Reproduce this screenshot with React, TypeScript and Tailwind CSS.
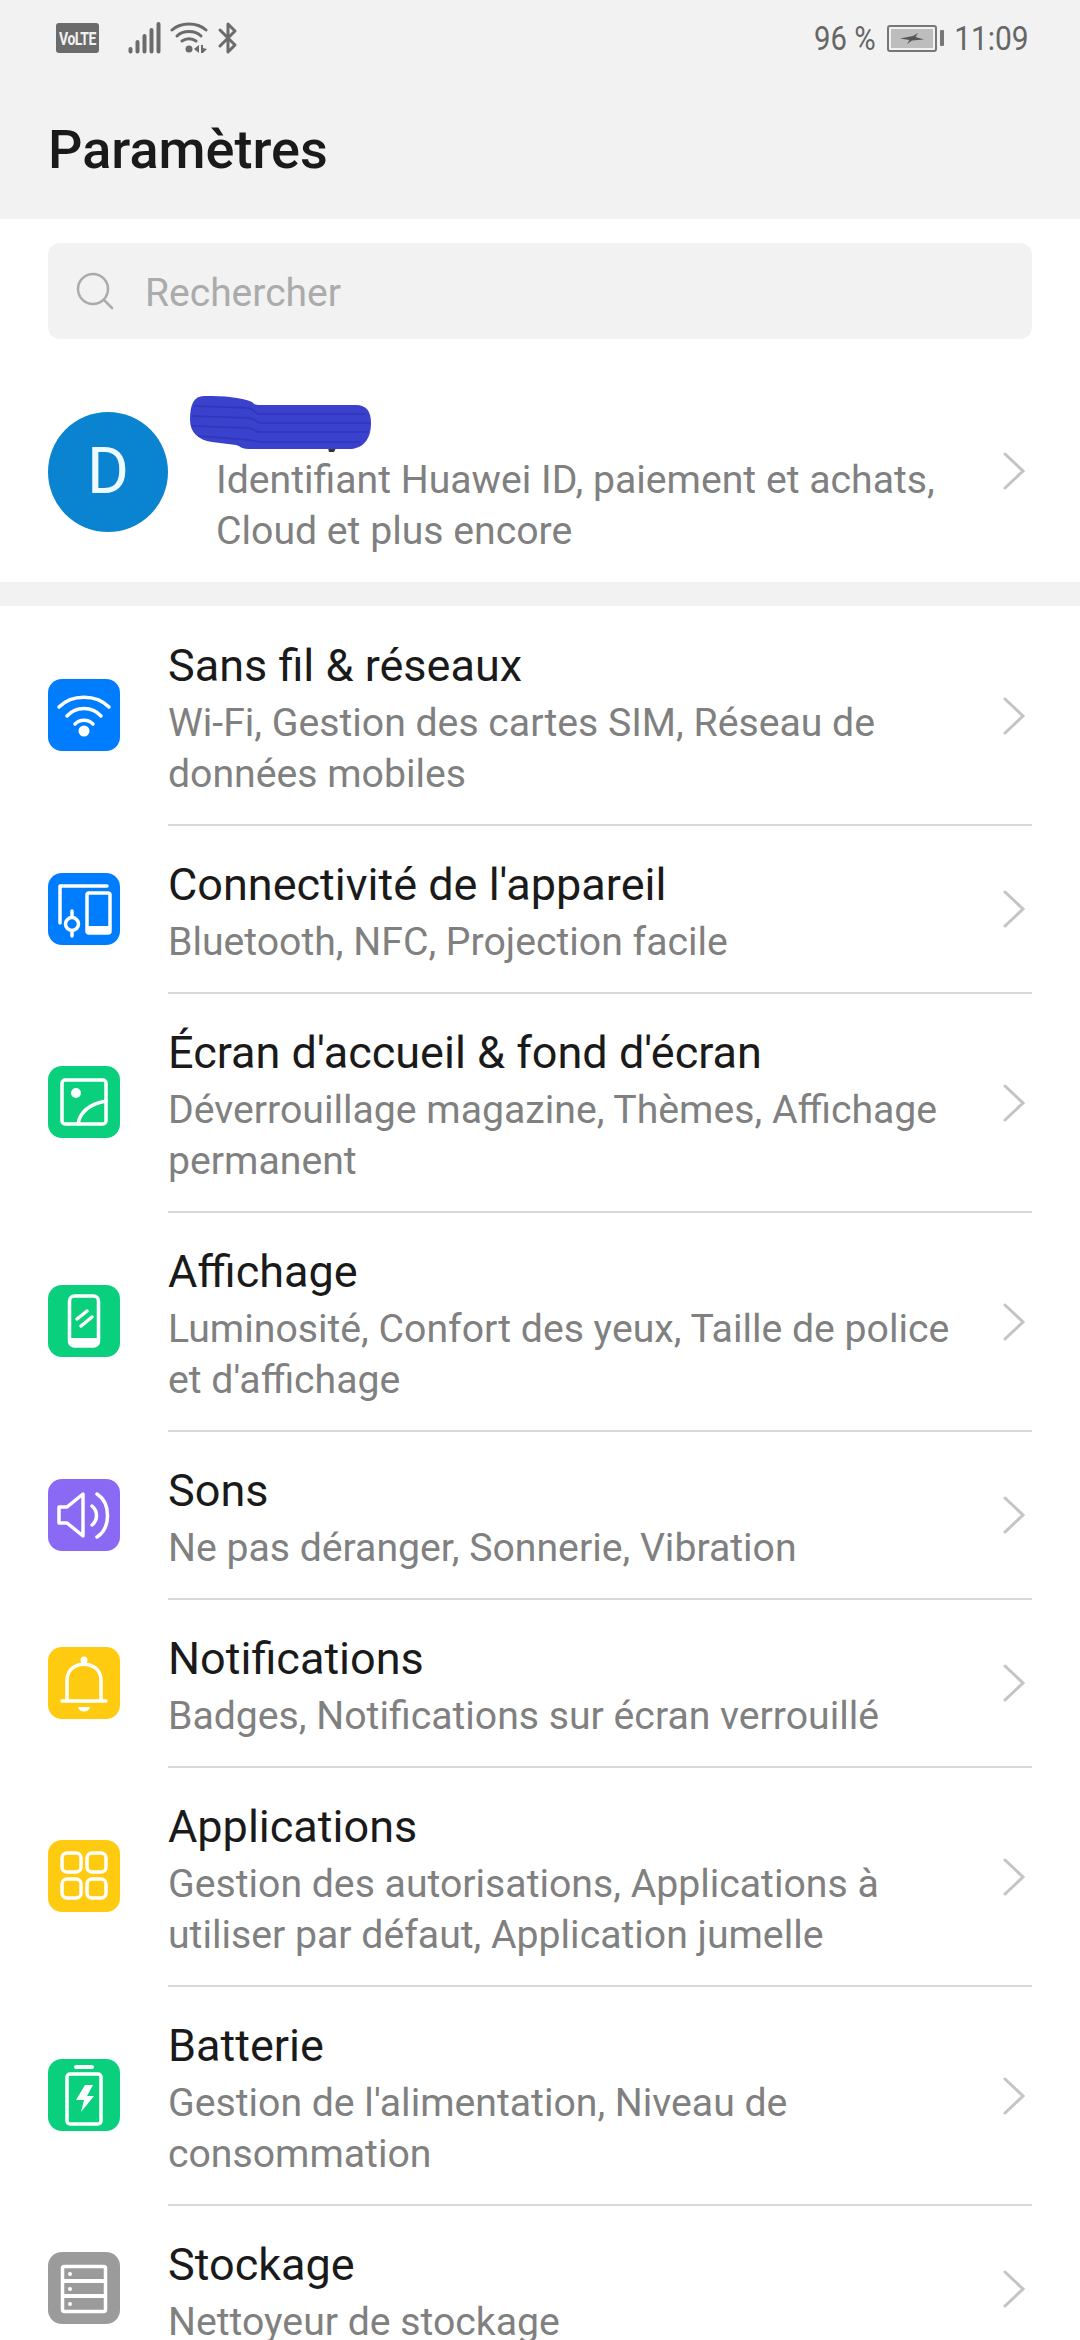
import React from "react";

const W = { fill: "none", stroke: "#fff", strokeLinecap: "round" as const, strokeLinejoin: "round" as const };

function Svg({ children }: { children: React.ReactNode }) {
  return (
    <svg width="72" height="72" viewBox="0 0 72 72" className="block">
      {children}
    </svg>
  );
}

const icons: Record<string, React.ReactNode> = {
  wifi: (
    <Svg>
      <g {...W} strokeWidth="3.5">
        <path d="M11 28 C24 15 48 15 61 28" />
        <path d="M19 37 C28 27 44 27 53 37" />
        <path d="M27 45 C32 40 40 40 45 45" />
      </g>
      <circle cx="36" cy="52" r="5.5" fill="#fff" />
    </Svg>
  ),
  conn: (
    <Svg>
      <g {...W} strokeWidth="3.5">
        <path d="M12 50 V13 H59" />
        <rect x="39" y="20" width="23" height="40" rx="2" />
        <circle cx="24" cy="51" r="6.5" />
        <path d="M24 38 V44 M24 58 V63" />
      </g>
      <rect x="39" y="53" width="23" height="7" fill="#fff" />
    </Svg>
  ),
  wall: (
    <Svg>
      <g {...W} strokeWidth="3.5">
        <rect x="14" y="14" width="44" height="44" rx="3" />
        <path d="M30 58 C32 46 42 38 58 35" />
      </g>
      <circle cx="28" cy="27" r="5" fill="#fff" />
    </Svg>
  ),
  disp: (
    <Svg>
      <g {...W} strokeWidth="3.5">
        <rect x="21.5" y="11" width="29" height="50" rx="5" />
        <path d="M29 34 L39 26 M33 41 L44 32" />
      </g>
      <rect x="22" y="53" width="28" height="7" fill="#fff" />
    </Svg>
  ),
  sound: (
    <Svg>
      <g {...W} strokeWidth="3.5">
        <path d="M11 28 H19 L35 15 V57 L19 44 H11 Z" />
        <path d="M44 27 C50 32 50 41 44 46" />
        <path d="M49 15 C63 24 63 49 49 58" />
      </g>
    </Svg>
  ),
  bell: (
    <Svg>
      <g {...W} strokeWidth="3.5">
        <path d="M19 52 V33 C19 12 53 12 53 33 V52" />
        <path d="M14 54 H58" />
      </g>
      <circle cx="36" cy="13" r="3.5" fill="#fff" />
      <path d="M30 60 H42 C41 66 31 66 30 60 Z" fill="#fff" />
    </Svg>
  ),
  apps: (
    <Svg>
      <g {...W} strokeWidth="3.5">
        <rect x="14" y="13" width="19" height="19" rx="5" />
        <rect x="39" y="13" width="19" height="19" rx="5" />
        <rect x="14" y="39" width="19" height="19" rx="5" />
        <rect x="39" y="39" width="19" height="19" rx="5" />
      </g>
    </Svg>
  ),
  batt: (
    <Svg>
      <path d="M28 8 H44" {...W} strokeWidth="4" />
      <rect x="19" y="15" width="34" height="50" rx="3" {...W} strokeWidth="3.5" />
      <path d="M37 26 H45 L39 37 H46 L33 53 L36 41 H28 Z" fill="#fff" />
    </Svg>
  ),
  stor: (
    <Svg>
      <rect x="14.5" y="14.5" width="43" height="45" rx="2" {...W} strokeWidth="3.5" />
      <path d="M15 29 H57 M15 44 H57" {...W} strokeWidth="4" />
      <circle cx="22" cy="22" r="2" fill="#fff" />
      <circle cx="22" cy="37" r="2" fill="#fff" />
      <circle cx="22" cy="52" r="2" fill="#fff" />
    </Svg>
  ),
};

const rows = [
  { i: "wifi", bg: "bg-[#007dff]", t: "Sans fil & réseaux", s: ["Wi-Fi, Gestion des cartes SIM, Réseau de", "données mobiles"] },
  { i: "conn", bg: "bg-[#007dff]", t: "Connectivité de l'appareil", s: ["Bluetooth, NFC, Projection facile"] },
  { i: "wall", bg: "bg-[#0acf7d]", t: "Écran d'accueil & fond d'écran", s: ["Déverrouillage magazine, Thèmes, Affichage", "permanent"] },
  { i: "disp", bg: "bg-[#0acf7d]", t: "Affichage", s: ["Luminosité, Confort des yeux, Taille de police", "et d'affichage"] },
  { i: "sound", bg: "bg-[#8a69f5]", t: "Sons", s: ["Ne pas déranger, Sonnerie, Vibration"] },
  { i: "bell", bg: "bg-[#ffcb10]", t: "Notifications", s: ["Badges, Notifications sur écran verrouillé"] },
  { i: "apps", bg: "bg-[#ffcb10]", t: "Applications", s: ["Gestion des autorisations, Applications à", "utiliser par défaut, Application jumelle"] },
  { i: "batt", bg: "bg-[#0acf7d]", t: "Batterie", s: ["Gestion de l'alimentation, Niveau de", "consommation"] },
  { i: "stor", bg: "bg-[#9b9b9b]", t: "Stockage", s: ["Nettoyeur de stockage"] },
];

function Chevron({ className }: { className?: string }) {
  return (
    <svg width="24" height="38" viewBox="0 0 24 38" className={`mr-[6px] shrink-0 ${className ?? ""}`}>
      <path d="M3 2 L21 19 L3 36" fill="none" stroke="#c4c4c4" strokeWidth="3" strokeLinecap="round" />
    </svg>
  );
}

function Row({ r, last }: { r: (typeof rows)[number]; last: boolean }) {
  return (
    <div className="flex items-center px-12">
      <div className={`-mt-[3px] h-[72px] w-[72px] shrink-0 rounded-[14px] ${r.bg}`}>{icons[r.i]}</div>
      <div className={`ml-12 flex min-w-0 flex-1 items-center justify-between pt-[30px] ${last ? "pb-[25px]" : "border-b-2 border-[#d9d9d9] pb-[24px]"}`}>
        <div>
          <div className="mb-[3px] text-[45px] leading-[58px] text-[#1a1a1a]">{r.t}</div>
          {r.s.map((l) => (
            <div key={l} className="text-[39.2px] leading-[51px] whitespace-nowrap text-[#808080]">
              {l}
            </div>
          ))}
        </div>
        <Chevron className="-mt-[6px]" />
      </div>
    </div>
  );
}

export default function App() {
  return (
    <div className="h-[2340px] w-[1080px] overflow-hidden bg-white font-['Roboto',sans-serif]">
      <div className="h-[219px] bg-[#f2f2f2] px-12">
        <div className="flex h-[76px] items-center justify-between">
          <div className="flex items-center">
            <div className="ml-[8px] flex h-[30px] w-[43px] items-center justify-center overflow-hidden rounded-[3px] bg-[#6b6b6b] text-[14px] leading-none font-bold tracking-[-0.5px] text-[#f2f2f2]">
              <span className="scale-y-[1.35]">VoLTE</span>
            </div>
            <svg width="33" height="32" viewBox="0 0 33 32" className="ml-[29px]">
              <g stroke="#6b6b6b" strokeWidth="4" strokeLinecap="round">
                <path d="M2.5 27 V29.5 M9.5 20 V29.5 M16.5 14 V29.5 M23.5 8 V29.5 M30.5 2 V29.5" />
              </g>
            </svg>
            <svg width="38" height="32" viewBox="0 0 38 32" className="ml-[9px]">
              <g fill="none" stroke="#6b6b6b" strokeWidth="3" strokeLinecap="round">
                <path d="M2 8 C11 0 27 0 36 8" />
                <path d="M7 14 C13 8 25 8 31 14" />
                <path d="M12 19 C16 16 22 16 26 19" />
              </g>
              <circle cx="19" cy="27" r="3.5" fill="#6b6b6b" />
              <path d="M24 27 L29 23 V31 Z M31 23 H33 V26 L37 27 L33 31 H31 Z" fill="#6b6b6b" />
            </svg>
            <svg width="22" height="34" viewBox="0 0 22 34" className="ml-[9px]">
              <path d="M3 9 L18 24 L11 31 V3 L18 10 L3 25" fill="none" stroke="#6b6b6b" strokeWidth="3" strokeLinejoin="round" strokeLinecap="round" />
            </svg>
          </div>
          <div className="flex items-center pr-[3px] text-[34px] leading-none text-[#666]">
            <span className="origin-right scale-x-[0.86] whitespace-nowrap">96 %</span>
            <div className="ml-[12px] flex items-center">
              <div className="h-[27px] w-[50px] rounded-[3px] border-2 border-[#777] p-[2px]">
                <div className="flex h-full w-full items-center justify-center bg-[#bdbdbd]">
                  <svg width="24" height="11" viewBox="0 0 24 11">
                    <path d="M0 5.5 L13 3 L18 0 L15.5 4 L24 6.5 L12 7.5 L7 11 L9.5 7 Z" fill="#555" />
                  </svg>
                </div>
              </div>
              <div className="ml-[3px] h-[16px] w-[4px] rounded-[1px] bg-[#777]" />
            </div>
            <span className="origin-right scale-x-[0.88] whitespace-nowrap">11:09</span>
          </div>
        </div>
        <div className="pt-[42px] text-[54px] leading-[64px] font-medium text-[#1a1a1a]">Paramètres</div>
      </div>

      <div className="px-12 pt-6">
        <div className="flex h-24 items-center rounded-[12px] bg-[#f2f2f2] pl-7">
          <svg width="38" height="38" viewBox="0 0 38 38">
            <circle cx="17" cy="17" r="15" fill="none" stroke="#ababab" strokeWidth="2.5" />
            <path d="M28 28 L36 36" stroke="#ababab" strokeWidth="2.5" strokeLinecap="round" />
          </svg>
          <span className="ml-[31px] pt-[5px] text-[39px] leading-none text-[#ababab]">Rechercher</span>
        </div>
      </div>

      <div className="flex h-[243px] items-start px-12">
        <div className="mt-[73px] flex h-[120px] w-[120px] shrink-0 items-center justify-center rounded-full bg-[#0a84d0] text-[64px] leading-none font-normal text-[#eefaff]">
          D
        </div>
        <div className="ml-[48px] min-w-0 flex-1 pt-[57px]">
          <svg width="182" height="56" viewBox="0 0 182 56" className="-ml-[26px] block">
            <path d="M138 52 L146 52 L144 56 L139 56 Z" fill="#333" />
            <path d="M14 0 C35 0 50 1 62 6 C64 8 65 9 68 9 L166 9 C176 9 181 15 181 27 C181 40 176 51 162 53 L58 53 C52 53 50 50 46 49 L22 46 C8 44 0 36 0 24 C0 8 4 0 14 0 Z" fill="#3a41cc" />
            <g stroke="#2f33b8" strokeWidth="1.5" fill="none" opacity="0.8">
              <path d="M4 10 L60 12 L68 18 L176 18" />
              <path d="M2 20 L60 22 L70 27 L180 27" />
              <path d="M2 30 L60 32 L68 36 L178 36" />
              <path d="M8 40 L60 44 L70 46 L170 46" />
            </g>
          </svg>
          <div className="pt-[3px] text-[39.2px] leading-[51px] whitespace-nowrap text-[#808080]">
            <div>Identifiant Huawei ID, paiement et achats,</div>
            <div>Cloud et plus encore</div>
          </div>
        </div>
        <div className="mt-[113px]">
          <Chevron />
        </div>
      </div>

      <div className="h-6 bg-[#f2f2f2]" />

      <div className="pt-px">
        {rows.map((r, i) => (
          <Row key={r.t} r={r} last={i === rows.length - 1} />
        ))}
      </div>
    </div>
  );
}
